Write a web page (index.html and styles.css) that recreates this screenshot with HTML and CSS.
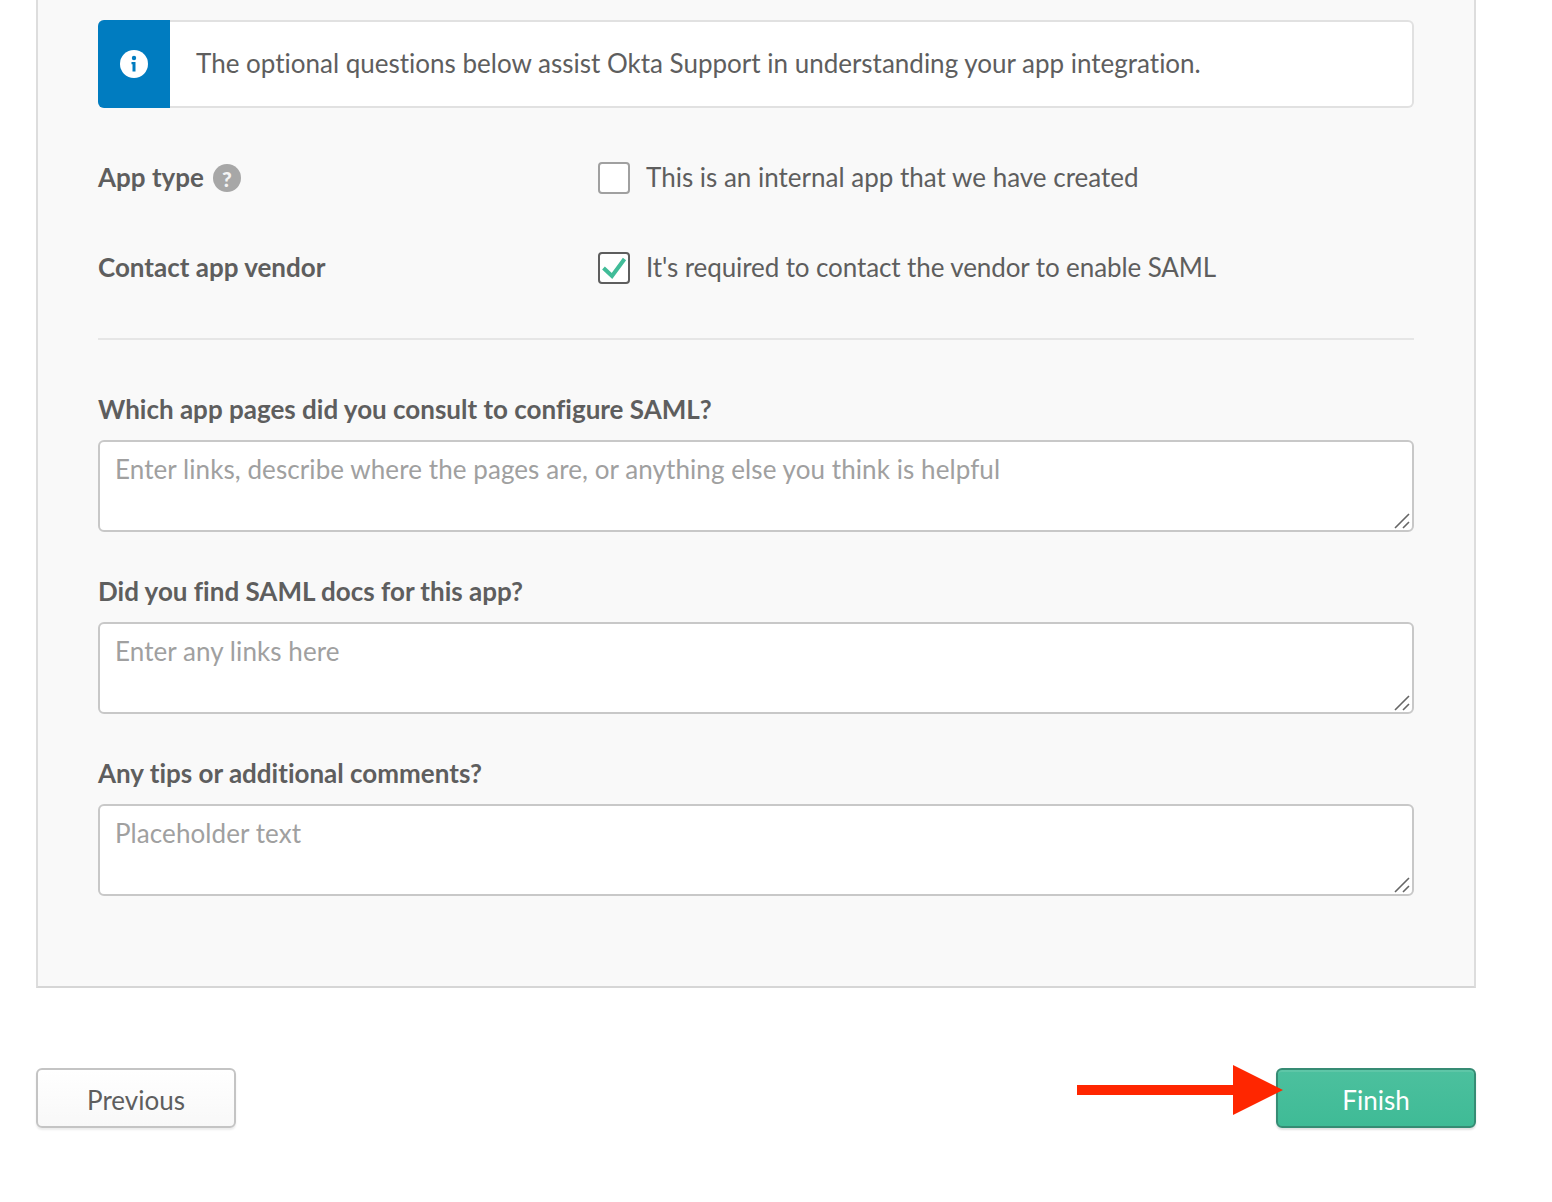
FILE: index.html
```html
<!DOCTYPE html>
<html lang="en">
<head>
  <meta charset="UTF-8">
  <meta name="viewport" content="width=device-width, initial-scale=1.0">
  <title>Create SAML Integration</title>
  <link rel="stylesheet" href="styles.css">
</head>
<body>
  <div class="wizard">
    <form class="panel">
      <div class="notice">
        <div class="notice-icon">
          <svg width="28" height="28" viewBox="0 0 28 28">
            <circle cx="14" cy="14" r="14" fill="#fff"/>
            <circle cx="14" cy="8" r="2.2" fill="#007cc0"/>
            <path d="M11.500 12h4v9.500h-3v-7.300h-1z" fill="#007cc0"/>
          </svg>
        </div>
        <p class="notice-text">The optional questions below assist Okta Support in understanding your app integration.</p>
      </div>

      <div class="check-row row-type">
        <div class="check-label"><span class="row-text">App type</span><span class="help">?</span></div>
        <label class="check-option">
          <span class="box"></span>
          <span class="row-text">This is an internal app that we have created</span>
        </label>
      </div>

      <div class="check-row row-vendor">
        <div class="check-label"><span class="row-text">Contact app vendor</span></div>
        <label class="check-option">
          <span class="box box-on">
            <svg width="28" height="28" viewBox="0 0 28 28">
              <path d="M3.500 14l8.500 8L24.500 5" fill="none" stroke="#41bc98" stroke-width="4"/>
            </svg>
          </span>
          <span class="row-text">It's required to contact the vendor to enable SAML</span>
        </label>
      </div>

      <hr class="divider">

      <div class="field">
        <label class="field-label">Which app pages did you consult to configure SAML?</label>
        <div class="input-wrap">
          <textarea placeholder="Enter links, describe where the pages are, or anything else you think is helpful"></textarea>
          <svg class="grip" width="20" height="16" viewBox="0 0 20 16"><path d="M1 15L15 1M9 15l6-6" stroke="#666" stroke-width="1.600"/></svg>
        </div>
      </div>
      <div class="field">
        <label class="field-label">Did you find SAML docs for this app?</label>
        <div class="input-wrap">
          <textarea placeholder="Enter any links here"></textarea>
          <svg class="grip" width="20" height="16" viewBox="0 0 20 16"><path d="M1 15L15 1M9 15l6-6" stroke="#666" stroke-width="1.600"/></svg>
        </div>
      </div>
      <div class="field">
        <label class="field-label">Any tips or additional comments?</label>
        <div class="input-wrap">
          <textarea placeholder="Placeholder text"></textarea>
          <svg class="grip" width="20" height="16" viewBox="0 0 20 16"><path d="M1 15L15 1M9 15l6-6" stroke="#666" stroke-width="1.600"/></svg>
        </div>
      </div>
    </form>

    <div class="actions">
      <button type="button" class="btn">Previous</button>
      <div class="finish-wrap">
        <svg class="arrow" width="208" height="52" viewBox="0 0 208 52">
          <path d="M0 21h156V1l50 25-50 25V31H0z" fill="#ff2600"/>
        </svg>
        <button type="button" class="btn btn-primary">Finish</button>
      </div>
    </div>
  </div>
</body>
</html>
```

FILE: styles.css
```css
html, body {
  margin: 0;
  height: 1202px;
  overflow: hidden;
  background-color: #fff;
}

body {
  font-family: Lato, "Open Sans", sans-serif;
  font-size: 26px;
  font-variant-ligatures: none;
  color: #5e5e5e;
}

.wizard {
  width: 1440px;
  margin-left: 36px;
}

.panel {
  box-sizing: border-box;
  height: 988px;
  padding: 20px 60px 0;
  background-color: #f9f9f9;
  border: 2px solid #ddd;
  border-top: 0;
  border-bottom-color: #d6d6d6;
}

.notice {
  display: flex;
  height: 88px;
  box-sizing: border-box;
  background-color: #fff;
  border: 2px solid #e1e1e1;
  border-left: 0;
  border-radius: 6px;
}

.notice-icon {
  display: flex;
  align-items: center;
  justify-content: center;
  width: 72px;
  margin: -2px 0;
  background-color: #007cc0;
  border-radius: 6px 0 0 6px;
}

.notice-text {
  margin: 0;
  padding-left: 26px;
  line-height: 82px;
}

.check-row {
  display: flex;
  align-items: center;
  height: 32px;
}

.row-type {
  margin-top: 54px;
}

.row-vendor {
  margin-top: 58px;
}

.row-vendor .check-option {
  letter-spacing: -0.1px;
}

.row-text {
  margin-top: -2px;
}

.check-label {
  display: flex;
  align-items: center;
  gap: 9px;
  width: 500px;
  font-weight: 700;
}

.help {
  display: flex;
  align-items: center;
  justify-content: center;
  width: 28px;
  height: 28px;
  border-radius: 50%;
  background-color: #a7a7a7;
  color: #f4f4f4;
  font-size: 21px;
  font-weight: 900;
}

.check-option {
  display: flex;
  align-items: center;
  gap: 16px;
}

.box {
  box-sizing: border-box;
  width: 32px;
  height: 32px;
  background-color: #fff;
  border: 2px solid #a0a0a0;
  border-radius: 4px;
}

.box-on {
  border-color: #5e5e5e;
}

.box-on svg {
  display: block;
}

.divider {
  height: 2px;
  margin: 54px 0 0;
  border: 0;
  background-color: #e6e6e6;
}

.field {
  margin-top: 54px;
}

.field + .field {
  margin-top: 44px;
}

.field-label {
  display: block;
  height: 32px;
  margin-bottom: 14px;
  line-height: 30px;
  font-weight: 700;
}

.input-wrap {
  position: relative;
}

textarea {
  display: block;
  box-sizing: border-box;
  width: 100%;
  height: 92px;
  padding: 11px 15px;
  background-color: #fff;
  border: 2px solid #c8c8c8;
  border-radius: 6px;
  font: inherit;
  letter-spacing: 0.08px;
  line-height: 32px;
  color: #5e5e5e;
  outline: none;
  resize: none;
}

textarea::placeholder {
  color: #a0a0a0;
  opacity: 1;
}

.grip {
  position: absolute;
  right: 0;
  bottom: 3px;
}

.actions {
  display: flex;
  justify-content: space-between;
  margin-top: 80px;
}

.finish-wrap {
  position: relative;
}

.btn {
  display: block;
  box-sizing: border-box;
  width: 200px;
  height: 60px;
  padding-top: 4px;
  background: linear-gradient(#fff, #f8f8f8);
  border: 2px solid #c4c4c4;
  border-radius: 6px;
  box-shadow: 0 2px 2px rgba(0, 0, 0, 0.08);
  font: inherit;
  color: #5e5e5e;
}

.btn-primary {
  background: linear-gradient(#4cc09e, #3fbb96);
  border-color: #368c74;
  box-shadow: inset 0 2px 0 rgba(255, 255, 255, 0.1), 0 2px 2px rgba(0, 0, 0, 0.12);
  color: #fff;
}

.arrow {
  position: absolute;
  top: -4px;
  left: -199px;
  z-index: 1;
}
```
